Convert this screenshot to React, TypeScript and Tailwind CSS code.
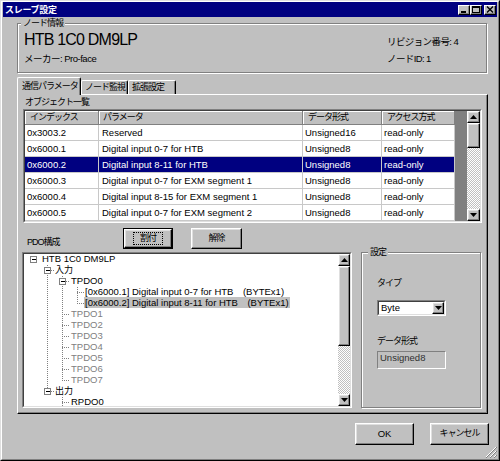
import React from 'react';

type ObjRow = { index: string; param: string; type: string; access: string; selected?: boolean };

const objects: ObjRow[] = [
  { index: '0x3003.2', param: 'Reserved', type: 'Unsigned16', access: 'read-only' },
  { index: '0x6000.1', param: 'Digital input 0-7 for HTB', type: 'Unsigned8', access: 'read-only' },
  { index: '0x6000.2', param: 'Digital input 8-11 for HTB', type: 'Unsigned8', access: 'read-only', selected: true },
  { index: '0x6000.3', param: 'Digital input 0-7 for EXM segment 1', type: 'Unsigned8', access: 'read-only' },
  { index: '0x6000.4', param: 'Digital input 8-15 for EXM segment 1', type: 'Unsigned8', access: 'read-only' },
  { index: '0x6000.5', param: 'Digital input 0-7 for EXM segment 2', type: 'Unsigned8', access: 'read-only' },
];

type TreeNode = { label: string; level: number; box?: boolean; gray?: boolean; selected?: boolean };

const tree: TreeNode[] = [
  { label: 'HTB 1C0 DM9LP', level: 0, box: true },
  { label: '入力', level: 1, box: true },
  { label: 'TPDO0', level: 2, box: true },
  { label: '[0x6000.1] Digital input 0-7 for HTB\u3000(BYTEx1)', level: 3 },
  { label: '[0x6000.2] Digital input 8-11 for HTB\u3000(BYTEx1)', level: 3, selected: true },
  { label: 'TPDO1', level: 2, gray: true },
  { label: 'TPDO2', level: 2, gray: true },
  { label: 'TPDO3', level: 2, gray: true },
  { label: 'TPDO4', level: 2, gray: true },
  { label: 'TPDO5', level: 2, gray: true },
  { label: 'TPDO6', level: 2, gray: true },
  { label: 'TPDO7', level: 2, gray: true },
  { label: '出力', level: 1, box: true },
  { label: 'RPDO0', level: 2 },
];

// text indent per tree level
const indent = ['pl-[18px]', 'pl-[31px]', 'pl-[47px]', 'pl-[61px]'];
// expander / connector x per tree level
const levelX = [9, 23, 38, 53];

const raised =
  'border border-t-white border-l-white border-r-black border-b-black shadow-[inset_-1px_-1px_0_#808080,inset_1px_1px_0_#dfdfdf]';

// Japanese labels: Noto CJK kana are full width, squeeze them a little
const ja = 'text-[9px] tracking-[-1px] whitespace-nowrap';

function TitleButton({ kind }: { kind: 'min' | 'max' | 'close' }) {
  return (
    <div className="w-[12px] h-[10px] bg-[#c0c0c0] border border-t-white border-l-white border-r-black border-b-black shadow-[inset_-1px_-1px_0_#808080] flex items-center justify-center">
      <svg width="8" height="7" viewBox="0 0 8 7" shapeRendering="crispEdges">
        {kind === 'min' && <rect x="1" y="5" width="5" height="2" fill="black" />}
        {kind === 'max' && (
          <>
            <rect x="0.5" y="0.5" width="7" height="6" fill="none" stroke="black" />
            <rect x="0" y="0" width="8" height="2" fill="black" />
          </>
        )}
        {kind === 'close' && <path d="M1 0.5 L7 6.5 M7 0.5 L1 6.5" stroke="black" strokeWidth="1.4" shapeRendering="auto" />}
      </svg>
    </div>
  );
}

function Arrow({ dir }: { dir: 'up' | 'down' }) {
  return (
    <div className={`h-[12px] shrink-0 bg-[#c0c0c0] flex items-center justify-center ${raised}`}>
      <svg width="7" height="4" viewBox="0 0 7 4">
        {dir === 'up' ? <polygon points="3.5,0 7,4 0,4" fill="black" /> : <polygon points="0,0 7,0 3.5,4" fill="black" />}
      </svg>
    </div>
  );
}

function ScrollBar({ thumb }: { thumb: string }) {
  return (
    <div className="h-full flex flex-col">
      <Arrow dir="up" />
      <div className={`${thumb} shrink-0 bg-[#c0c0c0] ${raised}`} />
      <div className="flex-1 bg-[repeating-conic-gradient(#ffffff_0%_25%,#c0c0c0_0%_50%)] bg-size-[2px_2px]" />
      <Arrow dir="down" />
    </div>
  );
}

function TreeLines() {
  const rowY = (i: number) => i * 11 + 5.5;
  return (
    <svg className="absolute inset-0" width="314" height="152">
      <g stroke="#808080" strokeDasharray="1 1" fill="none">
        <line x1="23.5" y1="11" x2="23.5" y2={rowY(12)} />
        <line x1="38.5" y1="22" x2="38.5" y2={rowY(11)} />
        <line x1="38.5" y1="143" x2="38.5" y2="160" />
        <line x1="53.5" y1="33" x2="53.5" y2={rowY(4)} />
        {tree.map((n, i) =>
          n.level > 0 ? (
            <line key={i} x1={levelX[n.level] + (n.box ? 4 : 0)} y1={rowY(i)} x2={levelX[n.level] + 8} y2={rowY(i)} />
          ) : null
        )}
      </g>
      {tree.map((n, i) =>
        n.box ? (
          <g key={'b' + i} shapeRendering="crispEdges">
            <rect x={levelX[n.level] - 3 + 0.5} y={rowY(i) - 3.5} width="6" height="6" fill="white" stroke="#808080" />
            <line x1={levelX[n.level] - 1} y1={rowY(i)} x2={levelX[n.level] + 3} y2={rowY(i)} stroke="black" />
          </g>
        ) : null
      )}
    </svg>
  );
}

export default function App() {
  return (
    <div className="relative w-[500px] h-[461px] overflow-hidden bg-[#c0c0c0] border border-t-[#dfdfdf] border-l-[#dfdfdf] border-r-black border-b-black font-['Liberation_Sans','Noto_Sans_CJK_JP',sans-serif] text-black select-none">
      <div className="h-full flex flex-col border border-t-white border-l-white border-r-[#808080] border-b-[#808080] px-px">
        {/* Title bar */}
        <div className="h-[15px] shrink-0 bg-[#000080] flex items-center justify-between pl-[2px] pr-[1px]">
          <span className="text-white text-[9px] leading-[12px] font-bold tracking-[-0.3px]">スレーブ設定</span>
          <div className="flex items-center">
            <TitleButton kind="min" />
            <TitleButton kind="max" />
            <div className="ml-[2px]">
              <TitleButton kind="close" />
            </div>
          </div>
        </div>

        {/* Node info */}
        <fieldset className="mt-px ml-[14px] w-[470px] h-[55px] shrink-0 border border-[#808080] shadow-[1px_1px_0_white,inset_1px_1px_0_white] px-[6px]">
          <legend className={`ml-[-3px] px-[2px] bg-[#c0c0c0] leading-[11px] ${ja}`}>ノード情報</legend>
          <div className="flex justify-between">
            <div className="flex flex-col">
              <div className="text-[16px] leading-[18px] tracking-[-0.8px] mt-[2px]">HTB 1C0 DM9LP</div>
              <div className="text-[9.5px] leading-[12px] mt-[4px] tracking-[-0.5px]">メーカー: Pro-face</div>
            </div>
            <div className="w-[93px] flex flex-col text-[9.5px] leading-[12px] pt-[7px] gap-[5px] tracking-[-0.6px]">
              <div>リビジョン番号: 4</div>
              <div>ノードID: 1</div>
            </div>
          </div>
        </fieldset>

        {/* Tabs */}
        <div className={`mt-[4px] ml-[14px] h-[17px] shrink-0 flex items-start ${ja}`}>
          <div className="relative z-10 w-[64px] h-[18px] bg-[#c0c0c0] border-t border-l border-white border-r border-r-black rounded-t-[2px] shadow-[inset_-1px_0_0_#808080] flex items-center pl-[4px]">
            通信パラメータ
          </div>
          <div className="mt-[3px] w-[47px] h-[14px] border-t border-l border-white border-r border-r-black rounded-t-[2px] shadow-[inset_-1px_0_0_#808080] flex items-center pl-[3px]">
            ノード監視
          </div>
          <div className="mt-[3px] w-[48px] h-[14px] border-t border-l border-white border-r border-r-black rounded-t-[2px] shadow-[inset_-1px_0_0_#808080] flex items-center pl-[3px]">
            拡張設定
          </div>
        </div>

        {/* Tab panel */}
        <div className="ml-[14px] w-[471px] h-[320px] shrink-0 flex flex-col border border-t-white border-l-white border-r-black border-b-black shadow-[inset_-1px_-1px_0_#808080]">
          <div className={`mt-px pl-[7px] h-[12px] leading-[12px] ${ja}`}>オブジェクト一覧</div>

          {/* Object list */}
          <div className="mt-px ml-[5px] w-[459px] h-[114px] border border-t-[#808080] border-l-[#808080] border-r-white border-b-white">
            <div className="h-full flex border border-t-[#404040] border-l-[#404040] border-r-[#dfdfdf] border-b-[#dfdfdf]">
              <div className="w-[430px] flex flex-col bg-white">
                <div className={`h-[14px] flex bg-[#c0c0c0] leading-[13px] ${ja}`}>
                  <div className="w-[74px] pl-[5px] border-r border-b border-[#808080] shadow-[inset_1px_1px_0_white]">インデックス</div>
                  <div className="w-[204px] pl-[4px] border-r border-b border-[#808080] shadow-[inset_1px_1px_0_white]">パラメータ</div>
                  <div className="w-[79px] pl-[5px] border-r border-b border-[#808080] shadow-[inset_1px_1px_0_white]">データ形式</div>
                  <div className="w-[73px] pl-[5px] border-r border-b border-[#808080] shadow-[inset_1px_1px_0_white]">アクセス方式</div>
                </div>
                {objects.map((r) => (
                  <div
                    key={r.index}
                    className={`h-[16px] flex text-[9.5px] leading-[15px] whitespace-nowrap ${r.selected ? 'bg-[#000080] text-white' : 'text-black'}`}
                  >
                    <div className="w-[74px] pl-[2px] border-r border-b border-[#c8c8c8] overflow-hidden">{r.index}</div>
                    <div className="w-[204px] pl-[3px] border-r border-b border-[#c8c8c8] overflow-hidden">{r.param}</div>
                    <div className="w-[79px] pl-[2px] border-r border-b border-[#c8c8c8] overflow-hidden">{r.type}</div>
                    <div className="w-[73px] pl-[2px] border-r border-b border-[#c8c8c8] overflow-hidden">{r.access}</div>
                  </div>
                ))}
              </div>
              <div className="w-[12px] bg-[#808080]" />
              <div className="w-[13px]">
                <ScrollBar thumb="h-[25px]" />
              </div>
            </div>
          </div>

          {/* PDO buttons */}
          <div className="mt-[5px] h-[21px] flex">
            <div className={`w-[105px] pl-[9px] self-end leading-[12px] mb-[1px] ${ja}`}>PDO構成</div>
            <div className="w-[50px] h-full border border-black">
              <div className={`h-full bg-[#c0c0c0] flex items-center justify-center ${raised}`}>
                <span className={`px-[6px] leading-[11px] outline outline-1 outline-dotted outline-black ${ja}`}>割付</span>
              </div>
            </div>
            <div className={`ml-[18px] w-[51px] h-full bg-[#c0c0c0] flex items-center justify-center ${ja} ${raised}`}>解除</div>
          </div>

          {/* PDO tree + settings */}
          <div className="mt-[3px] flex items-start">
            <div className="ml-[4px] w-[330px] h-[156px] border border-t-[#808080] border-l-[#808080] border-r-white border-b-white">
              <div className="h-full flex border border-t-[#404040] border-l-[#404040] border-r-[#dfdfdf] border-b-[#dfdfdf]">
                <div className="relative w-[314px] h-full bg-white overflow-hidden">
                  <TreeLines />
                  <div className="relative flex flex-col">
                    {tree.map((n, i) => (
                      <div
                        key={i}
                        className={`h-[11px] leading-[10px] whitespace-nowrap ${indent[n.level]} ${n.level === 1 ? 'text-[9px]' : 'text-[9.5px]'} ${n.gray ? 'text-[#808080]' : 'text-black'}`}
                      >
                        <span className={n.selected ? 'bg-[#c0c0c0] px-px -ml-px' : ''}>{n.label}</span>
                      </div>
                    ))}
                  </div>
                </div>
                <div className="w-[12px] h-full">
                  <ScrollBar thumb="h-[80px]" />
                </div>
              </div>
            </div>

            <fieldset className="-mt-[6px] ml-[9px] w-[120px] h-[162px] border border-[#808080] shadow-[1px_1px_0_white,inset_1px_1px_0_white] pl-[15px]">
              <legend className={`ml-[-9px] px-[2px] bg-[#c0c0c0] leading-[12px] ${ja}`}>設定</legend>
              <div className={`mt-[19px] leading-[12px] ${ja}`}>タイプ</div>
              <div className="mt-[11px] w-[69px] h-[16px] border border-t-[#808080] border-l-[#808080] border-r-white border-b-white">
                <div className="h-full flex bg-white border border-t-[#404040] border-l-[#404040] border-r-[#dfdfdf] border-b-[#dfdfdf]">
                  <div className="flex-1 pl-[2px] text-[9.5px] leading-[12px]">Byte</div>
                  <div className={`w-[12px] h-full bg-[#c0c0c0] flex items-center justify-center ${raised}`}>
                    <svg width="7" height="4" viewBox="0 0 7 4">
                      <polygon points="0,0 7,0 3.5,4" fill="black" />
                    </svg>
                  </div>
                </div>
              </div>
              <div className={`mt-[19px] leading-[12px] ${ja}`}>データ形式</div>
              <div className="mt-[4px] w-[69px] h-[18px] border border-t-[#808080] border-l-[#808080] border-r-white border-b-white pl-[2px] text-[9.5px] leading-[12px] text-[#303030]">
                Unsigned8
              </div>
            </fieldset>
          </div>
        </div>

        {/* Dialog buttons */}
        <div className="mt-[9px] h-[22px] flex justify-end gap-[16px] pr-[8px]">
          <div className={`w-[59px] h-full bg-[#c0c0c0] flex items-center justify-center text-[9.5px] ${raised}`}>OK</div>
          <div className={`w-[59px] h-full bg-[#c0c0c0] flex items-center justify-center ${ja} ${raised}`}>キャンセル</div>
        </div>
      </div>

      {/* Resize grip */}
      <svg className="absolute right-[2px] bottom-[2px]" width="12" height="12" viewBox="0 0 12 12">
        <g strokeWidth="1">
          <line x1="11" y1="1" x2="1" y2="11" stroke="white" />
          <line x1="12" y1="1" x2="1" y2="12" stroke="#808080" />
          <line x1="11" y1="5" x2="5" y2="11" stroke="white" />
          <line x1="12" y1="5" x2="5" y2="12" stroke="#808080" />
          <line x1="11" y1="9" x2="9" y2="11" stroke="white" />
          <line x1="12" y1="9" x2="9" y2="12" stroke="#808080" />
        </g>
      </svg>
    </div>
  );
}
